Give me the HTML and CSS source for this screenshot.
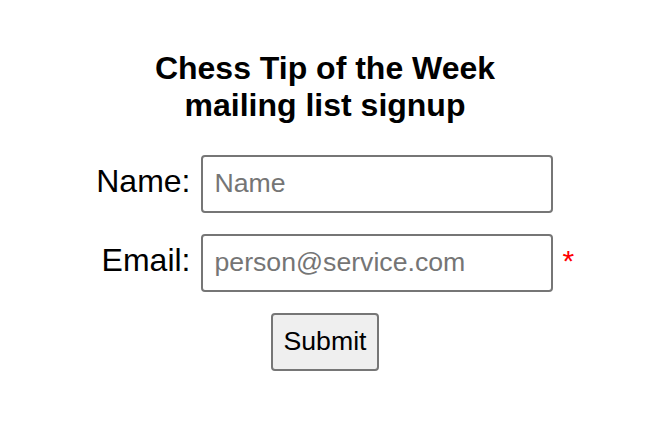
FILE: index.html
```html
<!DOCTYPE html>
<html>
<head>
<meta charset="utf-8">
<link rel="stylesheet" href="styles.css">
</head>
<body>
<div class="page">
  <h1 class="title">Chess Tip of the Week<br>mailing list signup</h1>
  <form class="signup">
    <label class="label" for="name">Name:</label>
    <input class="field" id="name" type="text" placeholder="Name">
    <span class="req"></span>
    <label class="label" for="email">Email:</label>
    <input class="field" id="email" type="email" placeholder="person@service.com">
    <span class="req">*</span>
    <div class="actions"><button class="submit" type="button">Submit</button></div>
  </form>
</div>
</body>
</html>
```
FILE: styles.css
```css
html, body {
  margin: 0;
  padding: 0;
  background: #fff;
}
body {
  font-family: "Liberation Sans", Arial, sans-serif;
  color: #000;
}
.page {
  width: 670px;
  padding-top: 50px;
}
.title {
  margin: 0 20px 0 0;
  text-align: center;
  font-size: 32px;
  font-weight: bold;
  line-height: 36.8px;
}
.signup {
  margin-top: 31px;
  display: grid;
  grid-template-columns: 95px 352px 12px;
  column-gap: 10px;
  row-gap: 21px;
  justify-content: center;
  align-items: baseline;
}
.label {
  font-size: 32px;
  text-align: right;
}
.field {
  box-sizing: border-box;
  width: 352px;
  height: 58px;
  border: 2px solid #767676;
  border-radius: 4px;
  padding: 0 12px;
  font-family: "Liberation Sans", Arial, sans-serif;
  font-size: 26.67px;
  color: #000;
  background: #fff;
}
.field::placeholder {
  color: #757575;
}
.req {
  color: #ff0000;
  font-size: 30px;
}
.actions {
  grid-column: 1 / -1;
  display: flex;
  justify-content: center;
  padding-right: 20px;
}
.submit {
  box-sizing: border-box;
  height: 58px;
  padding: 0 11px;
  border: 2px solid #767676;
  border-radius: 4px;
  background: #efefef;
  font-family: "Liberation Sans", Arial, sans-serif;
  font-size: 26.67px;
  color: #000;
}
```
